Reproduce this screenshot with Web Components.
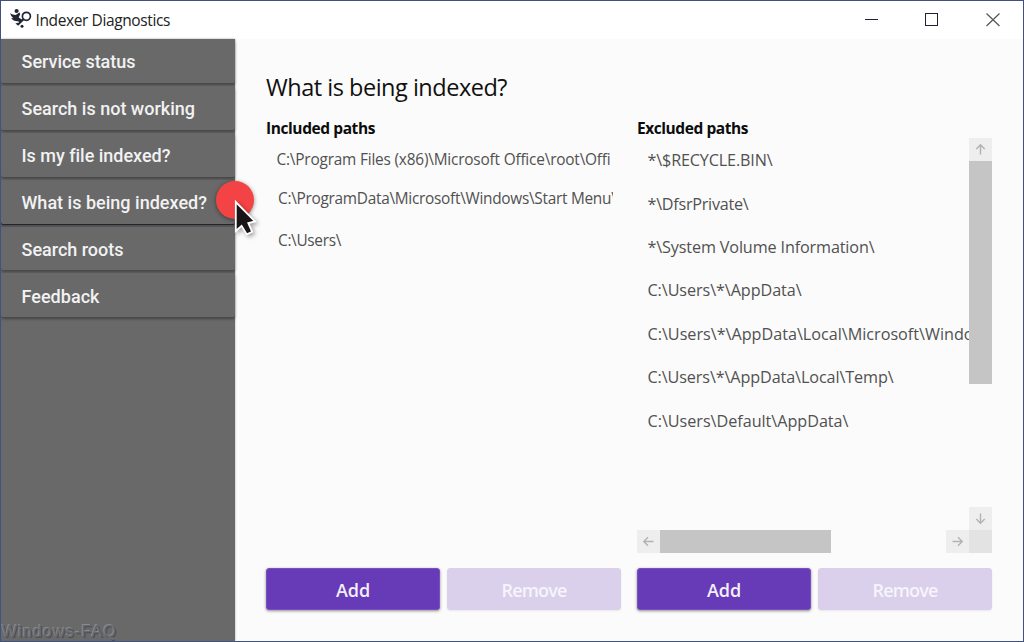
<!DOCTYPE html>
<html lang="en">
<head>
<meta charset="utf-8">
<title>Indexer Diagnostics</title>
<style>
  html, body { margin: 0; height: 100%; overflow: hidden; }
  body { font-family: "Open Sans", "Noto Sans", sans-serif; color: #111; }
</style>
</head>
<body>
<app-window>
  <title-bar slot="title"><fit-text width="134.5">Indexer Diagnostics</fit-text></title-bar>
  <side-menu slot="menu">
    <menu-entry><fit-text width="114">Service status</fit-text></menu-entry>
    <menu-entry><fit-text width="173.5">Search is not working</fit-text></menu-entry>
    <menu-entry><fit-text width="148.5">Is my file indexed?</fit-text></menu-entry>
    <menu-entry active><fit-text width="185.5">What is being indexed?</fit-text></menu-entry>
    <menu-entry><fit-text width="102">Search roots</fit-text></menu-entry>
    <menu-entry><fit-text width="78">Feedback</fit-text></menu-entry>
  </side-menu>
  <fit-text slot="heading" width="241">What is being indexed?</fit-text>
  <path-panel class="included">
    <fit-text slot="heading" width="109">Included paths</fit-text>
    <path-item class="first"><fit-text width="334">C:\Program Files (x86)\Microsoft Office\root\Offi</fit-text></path-item>
    <path-item class="second"><fit-text width="338.5">C:\ProgramData\Microsoft\Windows\Start Menu\</fit-text></path-item>
    <path-item class="third"><fit-text width="63">C:\Users\</fit-text></path-item>
  </path-panel>
  <path-panel class="excluded" scroll>
    <fit-text slot="heading" width="111">Excluded paths</fit-text>
    <path-item><fit-text width="125">*\$RECYCLE.BIN\</fit-text></path-item>
    <path-item><fit-text width="101">*\DfsrPrivate\</fit-text></path-item>
    <path-item><fit-text width="227">*\System Volume Information\</fit-text></path-item>
    <path-item><fit-text width="154">C:\Users\*\AppData\</fit-text></path-item>
    <path-item><fit-text width="326">C:\Users\*\AppData\Local\Microsoft\Windo</fit-text></path-item>
    <path-item><fit-text width="246">C:\Users\*\AppData\Local\Temp\</fit-text></path-item>
    <path-item><fit-text width="201">C:\Users\Default\AppData\</fit-text></path-item>
  </path-panel>
</app-window>

<script>
class AppWindow extends HTMLElement {
  constructor() {
    super();
    this.attachShadow({ mode: "open" });
    this.shadowRoot.innerHTML = `
      <style>
        :host {
          display: flex;
          flex-direction: column;
          box-sizing: border-box;
          width: 1024px;
          height: 642px;
          border: 1px solid #40527f;
          background: #fbfbfb;
          position: relative;
          overflow: hidden;
        }
        .body { display: flex; flex: 1; min-height: 0; }
        main {
          flex: 1;
          min-width: 0;
          padding: 31px 31px 0;
        }
        h1 {
          margin: 0;
          font-size: 23.5px;
          font-weight: 400;
          line-height: 34px;
          height: 47px;
          color: #101010;
        }
        .panels { display: grid; grid-template-columns: 355px 355px; column-gap: 16px; }
        mouse-pointer { position: absolute; left: 210px; top: 174px; }
      </style>
      <slot name="title"></slot>
      <div class="body">
        <slot name="menu"></slot>
        <main>
          <h1><slot name="heading"></slot></h1>
          <div class="panels"><slot></slot></div>
        </main>
      </div>
      <mouse-pointer></mouse-pointer>
    `;
  }
}

class TitleBar extends HTMLElement {
  constructor() {
    super();
    this.attachShadow({ mode: "open" });
    this.shadowRoot.innerHTML = `
      <style>
        :host {
          display: flex;
          align-items: center;
          height: 38px;
          flex: none;
          background: #fff;
          font-size: 15.5px;
          line-height: 22px;
          color: #222;
        }
        .logo { margin: 0 3px 2px 9px; }
        .name { flex: 1; padding-left: .5px; }
        .controls { margin-right: 21px; }
        svg { display: block; }
      </style>
      <svg class="logo" width="22" height="22" viewBox="0 0 22 22">
        <g fill="#202632">
          <circle cx="6.6" cy="3" r="2.1"/>
          <path d="M.3 5C1.8 6.600 3.600 6.900 5.600 6.900L9.400 4.600l.9 1.400L8.700 9.400l3.300 2.200-1 2.800-3.200-1.200C5 13.300 2.600 12.400 1.200 10l2.200.2C1.600 8.800.5 7.200.3 5z"/>
          <circle cx="12" cy="18.200" r="1.500"/>
          <path d="M5.400 15.600l2.600-.8-.2 2.400z"/>
        </g>
        <circle cx="16.400" cy="8.300" r="4" fill="none" stroke="#202632" stroke-width="1.700"/>
        <path d="M13.500 11.200L7.500 17" fill="none" stroke="#202632" stroke-width="1.900"/>
      </svg>
      <div class="name"><slot></slot></div>
      <svg class="controls" width="140" height="20" viewBox="0 0 140 20" fill="none" stroke="#1d2232">
        <path d="M3 9.500h13"/>
        <rect x="63.500" y="3.500" width="12" height="12"/>
        <path d="M124.500 3.500l13 12.500M137.500 3.500l-13 12.500" stroke="#555" stroke-width="1.200"/>
      </svg>
    `;
  }
}

class SideMenu extends HTMLElement {
  constructor() {
    super();
    this.attachShadow({ mode: "open" });
    this.shadowRoot.innerHTML = `
      <style>
        :host {
          display: flex;
          flex-direction: column;
          width: 234px;
          flex: none;
          background: #696969;
          color: #f2f2f2;
          font: 500 18px/24px Roboto, sans-serif;
          box-shadow: 0 0 2px rgba(0,0,0,.35);
        }
        .entries { flex: 1; }
        .watermark {
          display: flex;
          padding-left: 1px;
          font: 16px/18px "Liberation Sans", sans-serif;
          color: #686868;
          text-shadow: -1px -1px 0 #8b8a8f, 1px 1px 0 #484d5b;
          white-space: nowrap;
        }
      </style>
      <div class="entries"><slot></slot></div>
      <div class="watermark"><fit-text width="115">Windows-FAQ</fit-text></div>
    `;
  }
}

class MenuEntry extends HTMLElement {
  constructor() {
    super();
    this.attachShadow({ mode: "open" });
    this.shadowRoot.innerHTML = `
      <style>
        :host {
          display: flex;
          align-items: center;
          box-sizing: border-box;
          height: 43.9px;
          margin-bottom: 3px;
          padding: 3px 0 0 20.5px;
          border-radius: 2px;
          background: #696969;
          box-shadow: 0 2px 3px rgba(0,0,0,.35);
        }
        :host([active]) { box-shadow: 0 1px 0 #24262f, 0 3px 2px rgba(0,0,0,.25); }
      </style>
      <slot></slot>
    `;
  }
}

class PathPanel extends HTMLElement {
  constructor() {
    super();
    this.attachShadow({ mode: "open" });
    this.shadowRoot.innerHTML = `
      <style>
        :host { display: block; color: #515151; min-width: 0; }
        h2 {
          margin: 0;
          font-size: 15.5px;
          font-weight: 700;
          line-height: 22px;
          height: 21px;
          color: #0c0c0c;
        }
        .view {
          display: grid;
          grid-template-columns: minmax(0, 1fr) 23px;
          grid-template-rows: 392px 23px;
          height: 415px;
        }
        .list { overflow: hidden; white-space: nowrap; }
        :host(.included) .list {
          grid-column: 1 / -1;
          width: 347px;
          font-size: 15.4px;
          --row: 41px;
          --indent: 12px;
        }
        :host(.excluded) .list { font-size: 16.2px; --row: 43.4px; --indent: 10.5px; padding-top: .6px; }
        scroll-bar { display: none; }
        :host([scroll]) scroll-bar { display: flex; }
        .corner { display: none; background: #e3e3e3; }
        :host([scroll]) .corner { display: block; }
        .actions { display: grid; grid-template-columns: 1fr 1fr; gap: 7px; margin-top: 15px; }
      </style>
      <h2><slot name="heading"></slot></h2>
      <div class="view">
        <div class="list"><slot></slot></div>
        <scroll-bar></scroll-bar>
        <scroll-bar horizontal></scroll-bar>
        <div class="corner"></div>
      </div>
      <div class="actions">
        <push-button><fit-text width="34">Add</fit-text></push-button>
        <push-button disabled><fit-text width="65">Remove</fit-text></push-button>
      </div>
    `;
  }
}

class PathItem extends HTMLElement {
  constructor() {
    super();
    this.attachShadow({ mode: "open" });
    this.shadowRoot.innerHTML = `
      <style>
        :host {
          display: flex;
          align-items: center;
          height: var(--row);
          padding-left: var(--indent);
        }
        :host(.first) { --row: 42px; --indent: 10.5px; }
        :host(.second) { --row: 37px; }
        :host(.third) { --row: 47px; }
      </style>
      <slot></slot>
    `;
  }
}

class ScrollBar extends HTMLElement {
  constructor() {
    super();
    const horizontal = this.hasAttribute("horizontal");
    const arrow = (angle) => `
      <svg viewBox="0 0 23 23" width="23" height="23">
        <path d="M11.5 16.500V7M7.300 11L11.500 6.800 15.700 11" transform="rotate(${angle} 11.5 11.5)"
          fill="none" stroke="#b2b2b2" stroke-width="1.400"/>
      </svg>`;
    this.attachShadow({ mode: "open" });
    this.shadowRoot.innerHTML = `
      <style>
        :host { flex-direction: column; justify-content: space-between; }
        :host([horizontal]) { flex-direction: row; }
        svg { display: block; flex: none; background: #eee; }
        .thumb { background: #c5c5c5; height: 223px; margin-bottom: auto; }
        :host([horizontal]) .thumb { width: 171px; height: auto; margin: 0 auto 0 -.5px; }
      </style>
      ${arrow(horizontal ? -90 : 0)}
      <div class="thumb"></div>
      ${arrow(horizontal ? 90 : 180)}
    `;
  }
}

class PushButton extends HTMLElement {
  constructor() {
    super();
    this.attachShadow({ mode: "open" });
    this.shadowRoot.innerHTML = `
      <style>
        :host {
          display: flex;
          align-items: center;
          justify-content: center;
          box-sizing: border-box;
          height: 42px;
          padding-top: 2px;
          border-radius: 3px;
          background: #673ab7;
          border: 1px solid #7950c0;
          box-shadow: 0 1px 3px rgba(0,0,0,.45);
          color: #f3eff9;
          font-size: 18px;
          font-weight: 600;
          line-height: 24px;
        }
        :host([disabled]) {
          background: #dad0eb;
          border-color: #dad0eb;
          box-shadow: 0 1px 2px rgba(0,0,0,.08);
          color: #f7f4fb;
        }
      </style>
      <slot></slot>
    `;
  }
}

class MousePointer extends HTMLElement {
  constructor() {
    super();
    this.attachShadow({ mode: "open" });
    this.shadowRoot.innerHTML = `
      <style>
        :host { display: block; }
        svg { display: block; overflow: visible; }
        .spot { filter: drop-shadow(0 1px 2px rgba(0,0,0,.45)); }
        .arrow { filter: drop-shadow(2px 2px 2px rgba(0,0,0,.35)); }
      </style>
      <svg width="56" height="68" viewBox="0 0 56 68">
        <circle class="spot" cx="24" cy="25" r="19" fill="#f44344"/>
        <path class="arrow" d="M24.800 27V56l5.800-5.200 5.200 8.600 5.400-2.600-3.900-8.800 6.700-1.600z"
          fill="#1b1416" stroke="#fff" stroke-width="1.800"/>
      </svg>
    `;
  }
}

// Tracks its text in or out so that it takes up the given width.
class FitText extends HTMLElement {
  constructor() {
    super();
    this.attachShadow({ mode: "open" });
    this.shadowRoot.innerHTML = `
      <style>
        :host { display: inline-block; white-space: nowrap; }
        span { display: inline-block; }
      </style>
      <span><slot></slot></span>
    `;
  }

  connectedCallback() {
    const span = this.shadowRoot.querySelector("span");
    const target = Number(this.getAttribute("width"));
    const natural = span.getBoundingClientRect().width;
    const count = this.textContent.length;
    if (target && natural) span.style.letterSpacing = `${(target - natural) / count}px`;
  }
}

customElements.define("app-window", AppWindow);
customElements.define("title-bar", TitleBar);
customElements.define("side-menu", SideMenu);
customElements.define("menu-entry", MenuEntry);
customElements.define("path-panel", PathPanel);
customElements.define("path-item", PathItem);
customElements.define("scroll-bar", ScrollBar);
customElements.define("push-button", PushButton);
customElements.define("mouse-pointer", MousePointer);
customElements.define("fit-text", FitText);
</script>
</body>
</html>
